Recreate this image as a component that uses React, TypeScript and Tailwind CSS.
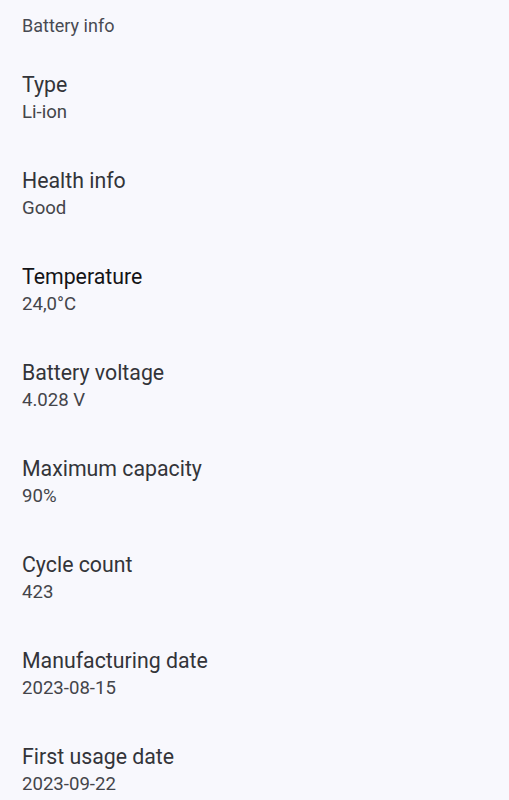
const rows = [
  { label: "Type", value: "Li-ion" },
  { label: "Health info", value: "Good" },
  { label: "Temperature", value: "24,0°C", active: true },
  { label: "Battery voltage", value: "4.028 V" },
  { label: "Maximum capacity", value: "90%" },
  { label: "Cycle count", value: "423" },
  { label: "Manufacturing date", value: "2023-08-15" },
  { label: "First usage date", value: "2023-09-22" },
];

export default function App() {
  return (
    <div className="min-h-screen bg-[#f8f8fd] font-['Roboto',sans-serif] overflow-hidden">
      <div className="h-[50px] px-[22px] flex items-center text-[18px] text-[#484a52]">
        Battery info
      </div>
      <div className="flex flex-col">
        {rows.map((r) => (
          <div key={r.label} className="h-[96px] px-[22px] pt-[21px] flex flex-col">
            <div
              className={
                "text-[21.3px] leading-[28px] " +
                (r.active ? "text-[#141417]" : "text-[#333439]")
              }
            >
              {r.label}
            </div>
            <div className="text-[18.6px] leading-[26px] text-[#44454a]">{r.value}</div>
          </div>
        ))}
      </div>
    </div>
  );
}
